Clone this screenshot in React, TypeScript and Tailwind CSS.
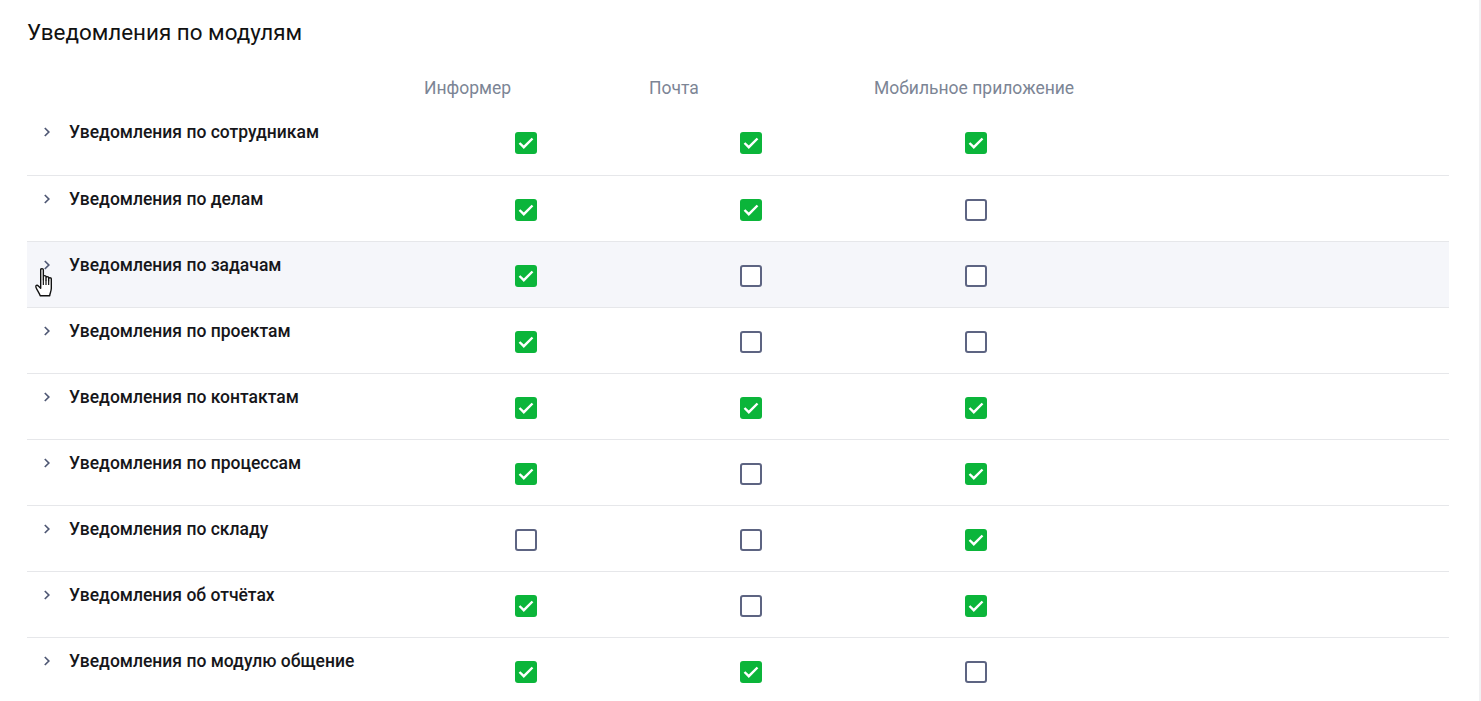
const COLUMNS = ['Информер', 'Почта', 'Мобильное приложение'];

type ModuleRow = {
  title: string;
  values: [boolean, boolean, boolean];
};

const ROWS: ModuleRow[] = [
  { title: 'Уведомления по сотрудникам', values: [true, true, true] },
  { title: 'Уведомления по делам', values: [true, true, false] },
  { title: 'Уведомления по задачам', values: [true, false, false] },
  { title: 'Уведомления по проектам', values: [true, false, false] },
  { title: 'Уведомления по контактам', values: [true, true, true] },
  { title: 'Уведомления по процессам', values: [true, false, true] },
  { title: 'Уведомления по складу', values: [false, false, true] },
  { title: 'Уведомления об отчётах', values: [true, false, true] },
  { title: 'Уведомления по модулю общение', values: [true, true, false] },
];

function Chevron() {
  return (
    <svg width="8" height="12" viewBox="0 0 8 12" className="shrink-0">
      <path d="M1.8 2 L5.8 6 L1.8 10" fill="none" stroke="#4f5874" strokeWidth="1.7" />
    </svg>
  );
}

function Check({ checked }: { checked: boolean }) {
  if (checked) {
    return (
      <span className="flex h-[22px] w-[22px] items-center justify-center rounded-[3px] bg-[#0bb53a]">
        <svg width="22" height="22" viewBox="0 0 22 22">
          <path d="M4.5 11 L8.8 15.2 L17.5 6.5" fill="none" stroke="#fff" strokeWidth="2.4" />
        </svg>
      </span>
    );
  }
  return (
    <span className="block h-[22px] w-[22px] rounded-[3px] border-2 border-[#5d6482] bg-white" />
  );
}

// pointer hovering the "задачам" row
function HandCursor() {
  return (
    <svg width="24" height="34" viewBox="0 0 22 32" className="pointer-events-none absolute left-[7px] top-[25px]">
      <path
        d="M6 2.5 C6 1.2 8.5 1.2 8.5 2.5 L8.5 12 L8.5 9 C8.5 7.8 11 7.8 11 9 L11 12.5 L11 10 C11 8.8 13.5 8.8 13.5 10 L13.5 13 L13.5 11 C13.5 9.8 16 9.8 16 11 L16 20 C16 23 14.5 25 14.5 27 L5.5 27 C5 25 2 21 1.5 19 C1 17.5 2.5 16.5 3.8 17.8 L6 20 Z"
        fill="#fff"
        stroke="#111"
        strokeWidth="1.3"
        strokeLinejoin="round"
      />
      <path d="M8.5 12 L8.5 17 M11 12.5 L11 17 M13.5 13 L13.5 17" stroke="#111" strokeWidth="1.1" />
    </svg>
  );
}

export default function App() {
  return (
    <div
      className="h-[701px] w-full border-r-2 border-[#f1f1f3] bg-white text-[#1b1b1f]"
      style={{ fontFamily: 'Roboto, "Noto Sans", sans-serif' }}
    >
      <div className="w-[1449px] pl-[27px]">
        <h2 className="pt-[19px] text-[22.4px] leading-[26px] font-normal text-[#111]">
          Уведомления по модулям
        </h2>

        <div className="mt-[33px] grid grid-cols-[397px_225px_225px_225px_1fr] text-[17.5px] leading-[20px] text-[#7c8595]">
          <div />
          {COLUMNS.map(col => (
            <div key={col}>{col}</div>
          ))}
          <div />
        </div>

        <div className="mt-[11px]">
          {ROWS.map((row, i) => (
            <div
              key={row.title}
              className={
                'relative grid h-[66px] grid-cols-[397px_225px_225px_225px_1fr] ' +
                (i === 0 ? '' : 'border-t border-[#e6e7ea] ') +
                (i === 2 ? 'bg-[#f5f6fa]' : '')
              }
            >
              <div className="flex items-start gap-[18px] pt-[13px] pl-[16px]">
                <span className="flex h-[20px] items-center">
                  <Chevron />
                </span>
                <span className="text-[17.5px] leading-[20px] font-medium text-[#16161a]">
                  {row.title}
                </span>
              </div>
              {row.values.map((v, j) => (
                <div key={j} className="flex justify-center pt-[23px] pr-[21px]">
                  <Check checked={v} />
                </div>
              ))}
              <div />
              {i === 2 ? <HandCursor /> : null}
            </div>
          ))}
        </div>
      </div>
    </div>
  );
}
